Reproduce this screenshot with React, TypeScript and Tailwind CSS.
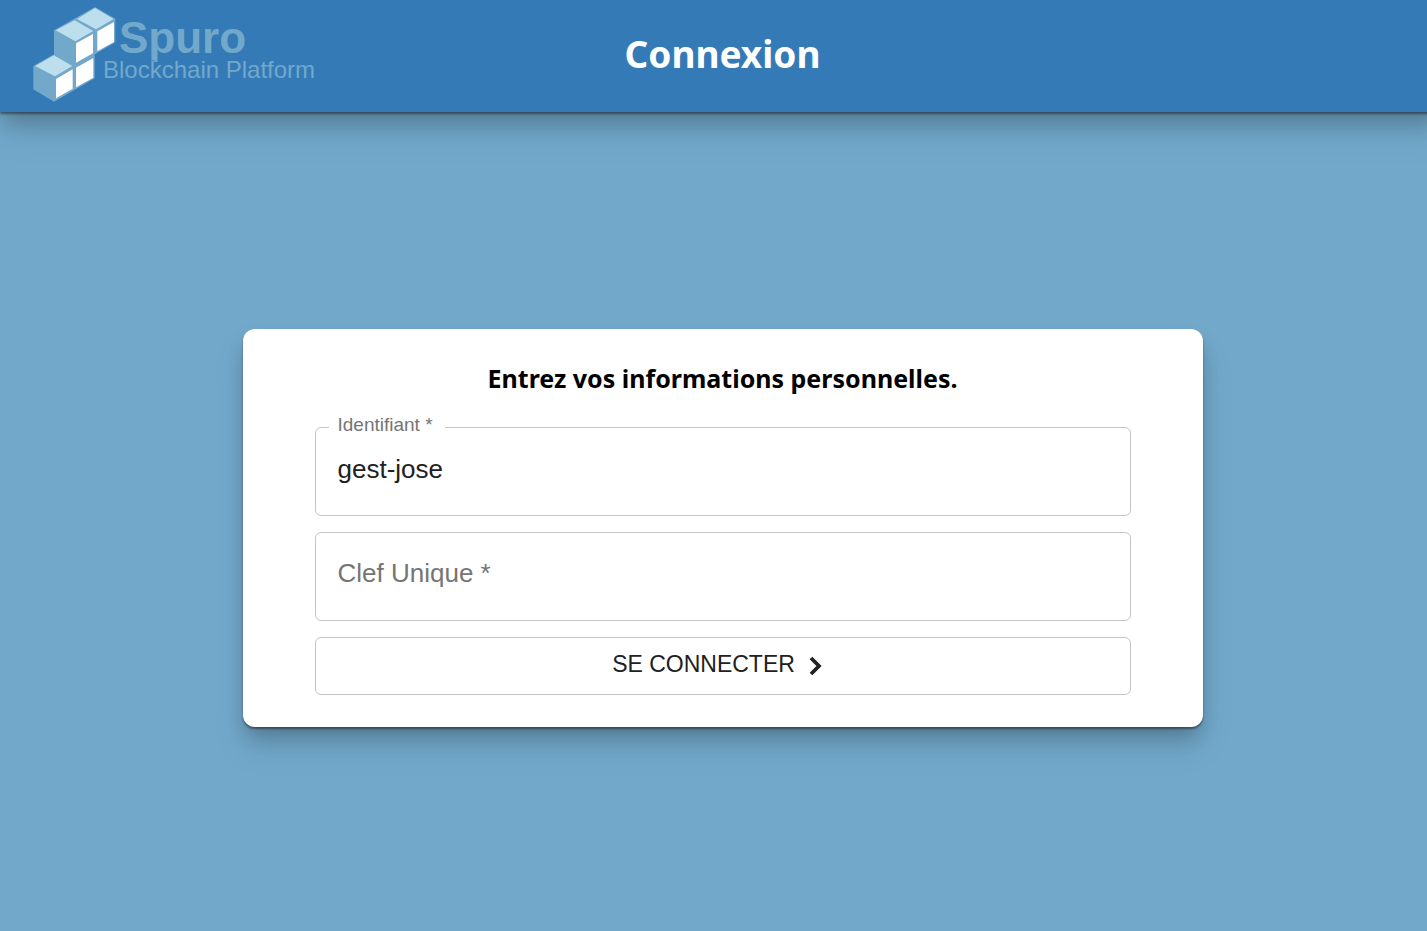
import { useState } from "react";

function Logo() {
  return (
    <svg
      className="block h-28 w-[330px]"
      viewBox="0 0 330 112"
      role="img"
      aria-label="Spuro Blockchain Platform"
    >
      <g transform="translate(20 0) scale(0.33333)">
        <path
          fill="#72a9cb"
          d="M102 91 225 21 286 56V127L224 163V235L102 305 40 268V198L102 163Z"
        />
        <path
          fill="#bddeec"
          d="M225 24 281 57 228 88 171 57ZM164 61 220 93 166 124 107 91ZM102 166 157 198 105 229 45 198Z"
        />
        <path
          fill="#fff"
          d="M232 94 282 66V126L232 154ZM168 130 219 102V160L168 188ZM168 203 220 174V233L168 262ZM108 237 158 208V266L108 295Z"
        />
      </g>
      <g fill="#72a9cb" fontFamily="'Liberation Sans', Arial, sans-serif">
        <text x="119" y="53" fontSize="44" fontWeight="700">
          Spuro
        </text>
        <text x="103" y="78" fontSize="24" stroke="#347ab7" strokeWidth="1" paintOrder="stroke">
          Blockchain Platform
        </text>
      </g>
    </svg>
  );
}

function Chevron() {
  return (
    <svg className="size-8" viewBox="0 0 24 24" fill="none" stroke="currentColor" strokeWidth="2.8" aria-hidden="true">
      <path d="m9 6 6 6-6 6" />
    </svg>
  );
}

interface FieldProps {
  id: string;
  label: string;
  type: string;
  value: string;
  onChange: (value: string) => void;
}

function Field({ id, label, type, value, onChange }: FieldProps) {
  const filled = value !== "";
  return (
    <div className="relative">
      <input
        id={id}
        type={type}
        value={value}
        required
        onChange={(e) => onChange(e.target.value)}
        className="block h-[89px] w-full rounded-md border border-[#c4c4c4] bg-white px-[22px] pb-1 text-[26px] text-[#212121] outline-none focus:border-[#347ab7]"
      />
      <label
        htmlFor={id}
        className={
          filled
            ? "absolute -top-3.5 left-3.5 bg-white pr-3 pl-[9px] text-[19px] leading-6 text-[#757575]"
            : "pointer-events-none absolute top-[23px] left-[23px] text-[26px] leading-9 text-[#757575]"
        }
      >
        {label} *
      </label>
    </div>
  );
}

export default function App() {
  const [user, setUser] = useState("gest-jose");
  const [secret, setSecret] = useState("");

  return (
    <div className="flex min-h-screen flex-col overflow-x-hidden bg-[#72a9cb] font-['Liberation_Sans',Arial,sans-serif]">
      <header className="-mr-[18px] grid h-28 grid-cols-[1fr_auto_1fr] items-center bg-[#347ab7] shadow-[0_2px_2px_rgba(0,0,0,0.4),0_12px_20px_-4px_rgba(0,0,0,0.2),0_20px_32px_0_rgba(0,0,0,0.12)]">
        <Logo />
        <h1 className="pb-1 font-['Noto_Sans',sans-serif] text-[37px] leading-[48px] font-bold text-white">
          Connexion
        </h1>
      </header>
      <main className="flex grow items-center justify-center pt-[13px] pl-[18px]">
        <form
          onSubmit={(e) => e.preventDefault()}
          className="flex w-full max-w-[960px] flex-col gap-4 rounded-xl bg-white px-[72px] py-8 shadow-[0_2px_2px_rgba(0,0,0,0.4),0_12px_20px_-4px_rgba(0,0,0,0.2),0_20px_32px_0_rgba(0,0,0,0.12)]"
        >
          <h2 className="mb-4 text-center font-['Noto_Sans',sans-serif] text-[25px] leading-[34px] font-bold text-black">
            Entrez vos informations personnelles.
          </h2>
          <Field id="login" label="Identifiant" type="text" value={user} onChange={setUser} />
          <Field id="key" label="Clef Unique" type="password" value={secret} onChange={setSecret} />
          <button
            type="submit"
            className="flex h-[58px] items-center justify-center gap-1 rounded-md border border-[#c4c4c4] pr-0.5 text-[23px] leading-8 text-[#212121]"
          >
            <span className="pb-1">SE CONNECTER</span>
            <Chevron />
          </button>
        </form>
      </main>
    </div>
  );
}
